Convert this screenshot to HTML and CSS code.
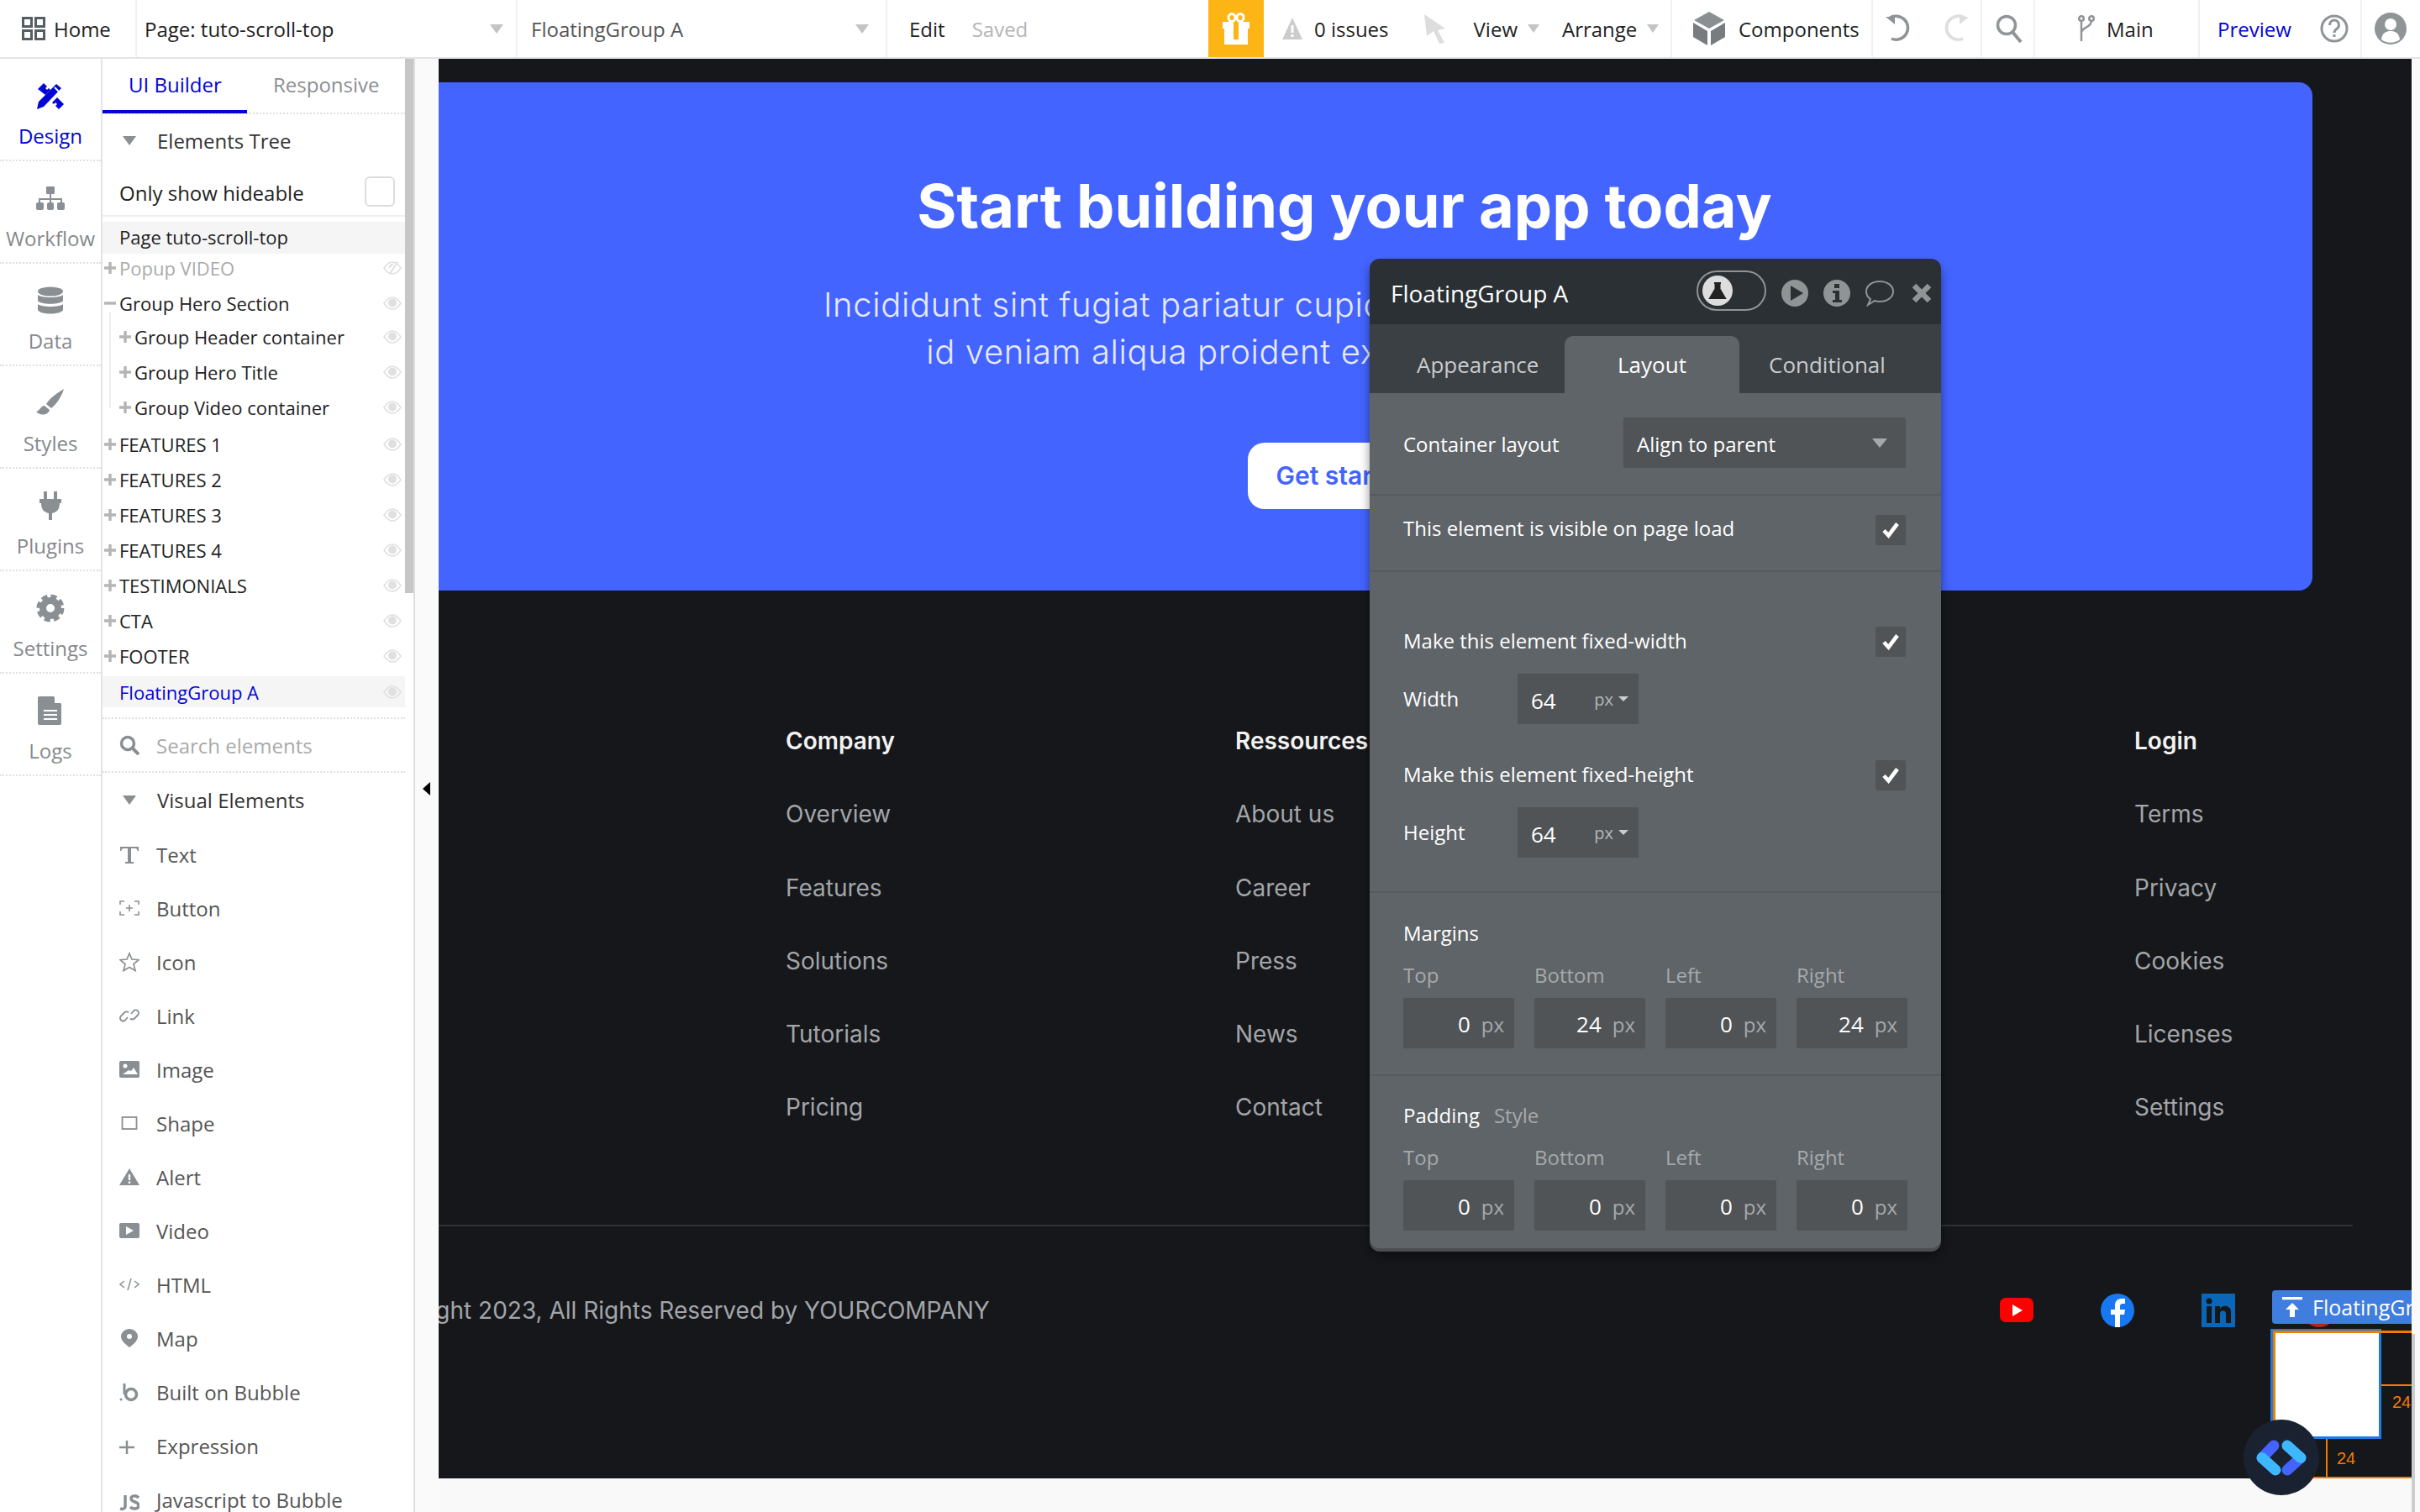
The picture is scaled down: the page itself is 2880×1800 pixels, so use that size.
FILE: index.html
```html
<!DOCTYPE html>
<html lang="en">
<head>
<meta charset="utf-8">
<title>Bubble editor</title>
<link rel="stylesheet" href="styles.css">
</head>
<body>
<svg class="defs" width="0" height="0">
  <symbol id="eye" viewBox="0 0 22 16"><path d="M1 8c3-4.500 6.500-7 10-7s7 2.500 10 7c-3 4.500-6.500 7-10 7S4 12.500 1 8z" fill="none" stroke="currentColor" stroke-width="1.500"/><circle cx="11" cy="7.500" r="5" fill="currentColor"/></symbol>
  <symbol id="eyeoff" viewBox="0 0 22 16"><path d="M1 8c3-4.500 6.500-7 10-7s7 2.500 10 7c-3 4.500-6.500 7-10 7S4 12.500 1 8z" fill="none" stroke="currentColor" stroke-width="1.500"/><path d="M8 15l9-14" stroke="currentColor" stroke-width="2"/><path d="M7 9a5 5 0 0 1 6-6z" fill="currentColor"/></symbol>
  <symbol id="plus" viewBox="0 0 14 14"><path d="M0 7h14M7 0v14" stroke="currentColor" stroke-width="3.400"/></symbol>
  <symbol id="minus" viewBox="0 0 14 14"><path d="M0 7h14" stroke="currentColor" stroke-width="3.400"/></symbol>
  <symbol id="check" viewBox="0 0 20 20"><path d="M2 10.500l5.500 6 10.500-14" fill="none" stroke="currentColor" stroke-width="4.600"/></symbol>
</svg>
<div class="app">
  <header class="topbar">
    <div class="cell c-home">
      <svg class="i28" viewBox="0 0 28 28"><g fill="none" stroke="#555e63" stroke-width="3"><rect x="1.500" y="1.500" width="10" height="10"/><rect x="16.500" y="1.500" width="10" height="10"/><rect x="1.500" y="16.500" width="10" height="10"/><rect x="16.500" y="16.500" width="10" height="10"/></g></svg>
      <span>Home</span>
    </div>
    <div class="cell c-page"><span>Page: tuto-scroll-top</span><i class="tri"></i></div>
    <div class="cell c-el"><span class="muted">FloatingGroup A</span><i class="tri"></i></div>
    <div class="cell c-edit"><span>Edit</span><span class="saved">Saved</span></div>
    <div class="gift">
      <svg width="36" height="38" viewBox="0 0 36 38"><g fill="#fff"><path d="M2 11h32v8h-2v19H4V19H2z"/></g><rect x="15" y="11" width="6" height="21" fill="#fdb515"/><g fill="none" stroke="#fff" stroke-width="3"><ellipse cx="13" cy="6" rx="4" ry="4.500"/><ellipse cx="23" cy="6" rx="4" ry="4.500"/></g></svg>
    </div>
    <div class="cell c-tools">
      <svg class="w-alert" width="26" height="28" viewBox="0 0 26 28"><path d="M13 1l12 26H1z" fill="#ccc"/><rect x="11.500" y="10" width="3" height="9" fill="#fff"/><rect x="11.500" y="21" width="3" height="3" fill="#fff"/></svg>
      <span class="issues">0 issues</span>
      <svg class="w-cursor" width="30" height="36" viewBox="0 0 30 36"><path d="M1 1l25 17-9 2 8 15-6 1-7-15-8 6z" fill="#ddd"/></svg>
      <span class="view">View</span><i class="tri t-s"></i>
      <span class="arrange">Arrange</span><i class="tri t-s"></i>
    </div>
    <div class="cell c-comp">
      <svg width="38" height="40" viewBox="0 0 38 40"><path d="M19 0l18 10-18 10L1 10z" fill="#8a8f92"/><path d="M0 13l17 10v17L0 30z" fill="#777c80"/><path d="M38 13L21 23v17l17-10z" fill="#777c80"/></svg>
      <span>Components</span>
    </div>
    <div class="cell c-undo">
      <svg width="34" height="34" viewBox="0 0 34 34"><path d="M5 5a14 14 0 1 1 3 24" fill="none" stroke="#8f9496" stroke-width="3.500"/><path d="M1 3h11v9z" fill="#8f9496"/></svg>
      <svg width="34" height="34" viewBox="0 0 34 34"><path d="M29 5a14 14 0 1 0-3 24" fill="none" stroke="#ddd" stroke-width="3.500"/><path d="M33 3H22v9z" fill="#ddd"/></svg>
    </div>
    <div class="cell c-search">
      <svg width="32" height="34" viewBox="0 0 32 34"><circle cx="13" cy="13" r="10.500" fill="none" stroke="#8f9496" stroke-width="3.500"/><path d="M20 21l10 12" stroke="#8f9496" stroke-width="4"/></svg>
    </div>
    <div class="cell c-main">
      <svg width="22" height="32" viewBox="0 0 22 32"><g fill="none" stroke="#8f9496" stroke-width="2.500"><circle cx="5" cy="4" r="2.800"/><circle cx="17" cy="4" r="2.800"/><path d="M5 7v24M17 7c0 8-12 7-12 14"/></g></svg>
      <span>Main</span>
    </div>
    <div class="cell c-prev">
      <span class="preview">Preview</span>
      <svg width="34" height="34" viewBox="0 0 34 34"><circle cx="17" cy="17" r="15" fill="none" stroke="#8f9496" stroke-width="3"/><path d="M11.500 13c0-8 11-8 11 0 0 5-5.500 4-5.500 9" fill="none" stroke="#8f9496" stroke-width="3"/><rect x="15.500" y="24" width="3" height="3" fill="#8f9496"/></svg>
    </div>
    <div class="cell c-avatar">
      <svg width="38" height="38" viewBox="0 0 38 38"><circle cx="19" cy="19" r="19" fill="#8f9496"/><circle cx="19" cy="14" r="7" fill="#fff"/><path d="M8 32c1-8 6-10 11-10s10 2 11 10c-6 5-16 5-22 0z" fill="#fff"/></svg>
    </div>
  </header>

  <div class="main">
    <nav class="rail">
      <div class="rail-item active">
        <svg class="rail-ic" viewBox="0 0 34 34"><g fill="#0205d3"><path d="M3 24L24 3l6 5L9 30l-8 3z"/><path d="M2 9l7-7 4 4-2 2 2 2 2-2 2 2-6 6z"/><path d="M19 25l6-6 8 8-6 6-4-4 2-2-2-2-2 2z"/></g><path d="M22 7l5 5" stroke="#fff" stroke-width="2"/></svg>
        <span>Design</span>
      </div>
      <div class="rail-item">
        <svg class="rail-ic" viewBox="0 0 34 34"><g fill="#8a8f93"><rect x="12" y="3" width="10" height="9" rx="1"/><rect x="0" y="22" width="9" height="9" rx="2"/><rect x="13" y="22" width="8" height="9" rx="2"/><rect x="25" y="22" width="9" height="9" rx="2"/></g><path d="M17 12v10M4 22v-4h26v4" fill="none" stroke="#8a8f93" stroke-width="2"/></svg>
        <span>Workflow</span>
      </div>
      <div class="rail-item">
        <svg class="rail-ic" viewBox="0 0 34 34"><g fill="#8a8f93"><ellipse cx="17" cy="6" rx="15" ry="5.500"/><path d="M2 10c4 4 26 4 30 0v7c-3 5-27 5-30 0z"/><path d="M2 21c4 4 26 4 30 0v7c-3 6-27 6-30 0z"/></g></svg>
        <span>Data</span>
      </div>
      <div class="rail-item">
        <svg class="rail-ic" viewBox="0 0 34 34"><g fill="#8a8f93"><path d="M33 0C25 5 16 11 12 18l6 5C24 18 30 10 33 0z"/><path d="M10 20c-5 0-5 6-10 7 4 5 14 5 16-2z"/></g></svg>
        <span>Styles</span>
      </div>
      <div class="rail-item">
        <svg class="rail-ic" viewBox="0 0 34 34"><g fill="#8a8f93"><rect x="9" y="0" width="4" height="9"/><rect x="21" y="0" width="4" height="9"/><path d="M4 9h26v5h-2c0 8-4 11-9 12v8h-4v-8c-5-1-9-4-9-12H4z"/></g></svg>
        <span>Plugins</span>
      </div>
      <div class="rail-item">
        <svg class="rail-ic" viewBox="0 0 34 34"><circle cx="17" cy="17" r="14" fill="none" stroke="#8a8f93" stroke-width="5" stroke-dasharray="7 4"/><circle cx="17" cy="17" r="9" fill="none" stroke="#8a8f93" stroke-width="8"/></svg>
        <span>Settings</span>
      </div>
      <div class="rail-item">
        <svg class="rail-ic" viewBox="0 0 34 34"><path d="M4 0h17l9 9v23a2 2 0 0 1-2 2H4a2 2 0 0 1-2-2V2a2 2 0 0 1 2-2z" fill="#8a8f93"/><path d="M22 0v8h8" fill="#fff"/><path d="M9 17h16M9 22h16M9 27h16" stroke="#fff" stroke-width="2"/></svg>
        <span>Logs</span>
      </div>
    </nav>

    <aside class="panel">
      <div class="panel-body">
        <div class="tabs">
          <div class="tab on">UI Builder</div>
          <div class="tab">Responsive</div>
        </div>
        <div class="sec-head h-tree"><i class="tri t-dark"></i><span>Elements Tree</span></div>
        <div class="only"><span>Only show hideable</span><i class="box"></i></div>
        <div class="page-row hl">Page tuto-scroll-top</div>
        <div class="tree">
          <div class="row dim"><svg class="plus"><use href="#plus"/></svg><span>Popup VIDEO</span><svg class="eye"><use href="#eyeoff"/></svg></div>
          <div class="row"><svg class="plus"><use href="#minus"/></svg><span>Group Hero Section</span><svg class="eye"><use href="#eye"/></svg></div>
          <div class="nested">
            <div class="row"><svg class="plus"><use href="#plus"/></svg><span>Group Header container</span><svg class="eye"><use href="#eye"/></svg></div>
            <div class="row"><svg class="plus"><use href="#plus"/></svg><span>Group Hero Title</span><svg class="eye"><use href="#eye"/></svg></div>
            <div class="row"><svg class="plus"><use href="#plus"/></svg><span>Group Video container</span><svg class="eye"><use href="#eye"/></svg></div>
          </div>
          <div class="row"><svg class="plus"><use href="#plus"/></svg><span>FEATURES 1</span><svg class="eye"><use href="#eye"/></svg></div>
          <div class="row"><svg class="plus"><use href="#plus"/></svg><span>FEATURES 2</span><svg class="eye"><use href="#eye"/></svg></div>
          <div class="row"><svg class="plus"><use href="#plus"/></svg><span>FEATURES 3</span><svg class="eye"><use href="#eye"/></svg></div>
          <div class="row"><svg class="plus"><use href="#plus"/></svg><span>FEATURES 4</span><svg class="eye"><use href="#eye"/></svg></div>
          <div class="row"><svg class="plus"><use href="#plus"/></svg><span>TESTIMONIALS</span><svg class="eye"><use href="#eye"/></svg></div>
          <div class="row"><svg class="plus"><use href="#plus"/></svg><span>CTA</span><svg class="eye"><use href="#eye"/></svg></div>
          <div class="row"><svg class="plus"><use href="#plus"/></svg><span>FOOTER</span><svg class="eye"><use href="#eye"/></svg></div>
          <div class="row selrow hl"><i class="plus"></i><span>FloatingGroup A</span><svg class="eye"><use href="#eye"/></svg></div>
        </div>
        <div class="search">
          <svg class="el-ic" viewBox="0 0 24 24"><circle cx="10" cy="10" r="7.500" fill="none" stroke="#8a8f93" stroke-width="3.500"/><path d="M15 15l8 8" stroke="#8a8f93" stroke-width="4"/></svg>
          <span>Search elements</span>
        </div>
        <div class="sec-head h-vis"><i class="tri t-dark"></i><span>Visual Elements</span></div>
        <div class="elements">
          <div class="el"><svg class="el-ic" viewBox="0 0 24 24"><path d="M1 3h22v5h-1.500c0-2-1-3-2.500-3h-5v16h3v2H7v-2h3V5H5C3.500 5 2.500 6 2.500 8H1z" fill="#8a8f93"/></svg><span>Text</span></div>
          <div class="el"><svg class="el-ic" viewBox="0 0 24 24"><path d="M6 4H1v4M18 4h5v4M6 20H1v-4M18 20h5v-4M12 8v8M8 12h8" fill="none" stroke="#8a8f93" stroke-width="1.600"/></svg><span>Button</span></div>
          <div class="el"><svg class="el-ic" viewBox="0 0 24 24"><path d="M12 2l3 7 8 .7-6 5.200 2 7.600-7-4-7 4 2-7.600-6-5.200L9 9z" fill="none" stroke="#8a8f93" stroke-width="1.700"/></svg><span>Icon</span></div>
          <div class="el"><svg class="el-ic" viewBox="0 0 24 24"><g fill="none" stroke="#8a8f93" stroke-width="1.800"><path d="M10 14l-3 3.500a3.500 3.500 0 0 1-5-5l4-4a3.500 3.500 0 0 1 5 0"/><path d="M14 10l3-3.500a3.500 3.500 0 0 1 5 5l-4 4a3.500 3.500 0 0 1-5 0"/></g></svg><span>Link</span></div>
          <div class="el"><svg class="el-ic" viewBox="0 0 24 24"><rect x="0" y="2" width="24" height="20" rx="2" fill="#8a8f93"/><circle cx="7" cy="8" r="2.500" fill="#fff"/><path d="M4 18l7-5 3 1 3-4 5 8z" fill="#fff"/></svg><span>Image</span></div>
          <div class="el"><svg class="el-ic" viewBox="0 0 24 24"><rect x="3.500" y="5" width="17" height="14" fill="none" stroke="#8a8f93" stroke-width="1.800"/></svg><span>Shape</span></div>
          <div class="el"><svg class="el-ic" viewBox="0 0 24 24"><path d="M12 2l12 20H0z" fill="#8a8f93"/><rect x="10.800" y="9" width="2.400" height="7" fill="#fff"/><rect x="10.800" y="17.500" width="2.400" height="2.400" fill="#fff"/></svg><span>Alert</span></div>
          <div class="el"><svg class="el-ic" viewBox="0 0 24 24"><rect x="0" y="3" width="24" height="18" rx="2" fill="#8a8f93"/><path d="M8 7l9 5-9 5z" fill="#fff"/></svg><span>Video</span></div>
          <div class="el"><svg class="el-ic" viewBox="0 0 24 24"><path d="M6 8l-5 4 5 4M18 8l5 4-5 4M14 5l-4 14" fill="none" stroke="#8a8f93" stroke-width="1.500"/></svg><span>HTML</span></div>
          <div class="el"><svg class="el-ic" viewBox="0 0 24 24"><path d="M12 23C7 19 2 15 2 10a10 9 0 0 1 20 0c0 5-5 9-10 13z" fill="#8a8f93"/><circle cx="12" cy="10" r="3" fill="#fff"/></svg><span>Map</span></div>
          <div class="el"><svg class="el-ic" viewBox="0 0 24 24"><circle cx="2" cy="21" r="1.500" fill="#8a8f93"/><path d="M6 2v13" stroke="#8a8f93" stroke-width="3"/><circle cx="14" cy="15" r="6.500" fill="none" stroke="#8a8f93" stroke-width="3.500"/></svg><span>Built on Bubble</span></div>
          <div class="el"><svg class="el-ic" viewBox="0 0 24 24"><path d="M0 14h18M9 6v16" stroke="#8a8f93" stroke-width="2.500"/></svg><span>Expression</span></div>
          <div class="el"><svg class="el-ic js-ic" viewBox="0 0 24 24"><path d="M7 4v13c0 3-3 4-6 3M23 7c-3-3-9-3-9 1 0 5 9 3 9 8 0 5-7 5-10 2" fill="none" stroke="#8a8f93" stroke-width="3.500"/></svg><span>Javascript to Bubble</span></div>
        </div>
      </div>
      <div class="track"><div class="thumb"></div></div>
    </aside>

    <div class="collapse"><i class="tri-left"></i></div>

    <section class="canvas">
      <div class="site">
        <div class="cta">
          <h1>Start building your app today</h1>
          <p>Incididunt sint fugiat pariatur cupidatat reprehenderit anim aliqua<br>id veniam aliqua proident excepteur commodo do a.</p>
          <a class="cta-btn">Get started</a>
        </div>
        <footer class="foot">
          <div class="foot-cols">
            <div></div>
            <div class="col"><b>Company</b><span>Overview</span><span>Features</span><span>Solutions</span><span>Tutorials</span><span>Pricing</span></div>
            <div class="col"><b>Ressources</b><span>About us</span><span>Career</span><span>Press</span><span>News</span><span>Contact</span></div>
            <div></div>
            <div class="col"><b>Login</b><span>Terms</span><span>Privacy</span><span>Cookies</span><span>Licenses</span><span>Settings</span></div>
          </div>
          <div class="foot-bottom">
            <span class="copy">Copyright 2023, All Rights Reserved by YOURCOMPANY</span>
            <div class="social">
              <svg width="40" height="40" viewBox="0 0 40 40"><rect x="0" y="5" width="40" height="29" rx="7" fill="#f00"/><path d="M15 13l12 7-12 7z" fill="#fff"/></svg>
              <svg width="40" height="40" viewBox="0 0 40 40"><circle cx="20" cy="20" r="20" fill="#1877f2"/><path d="M17 40V25h-5v-6h5v-5c0-5 3-8 8-8h4v6h-3c-2 0-3 1-3 3v4h6l-1 6h-5v15z" fill="#fff"/></svg>
              <svg width="40" height="40" viewBox="0 0 40 40"><rect width="40" height="40" fill="#0a66b7"/><g fill="#16171a"><circle cx="9" cy="9" r="3.500"/><rect x="6" y="15" width="6" height="20"/><path d="M16 15h6v3c2-5 13-5 13 4v13h-6V24c0-5-7-5-7 0v11h-6z"/></g></svg>
              <svg width="40" height="40" viewBox="0 0 40 40"><circle cx="20" cy="20" r="20" fill="#b3261e"/></svg>
            </div>
          </div>
        </footer>
      </div>
    </section>

    <div class="edge"><div class="edge-thumb"></div></div>
  </div>

  <div class="sel-box"></div>
  <div class="guide g-top"></div>
  <div class="guide g-left"></div>
  <div class="guide g-rv"></div>
  <div class="guide g-bv"></div>
  <div class="guide g-bh"></div>
  <span class="num n-r">24</span>
  <span class="num n-b">24</span>
  <div class="sel-label">
    <svg width="24" height="24" viewBox="0 0 24 24"><path d="M0 1.500h24" stroke="#fff" stroke-width="3.500"/><path d="M12 7l8 8h-5v9H9v-9H4z" fill="#fff"/></svg>
    <span>FloatingGroup A</span>
  </div>
  <div class="badge">
    <svg width="60" height="43" viewBox="0 0 60 43"><g fill="none" stroke-linecap="round" stroke-width="13"><path d="M7 21.500L21 7" stroke="#4364ff"/><path d="M53 21.500L37 36" stroke="#4364ff"/><path d="M7 21.500L23 36" stroke="#3db8ff"/><path d="M37 7l16 14.500" stroke="#3db8ff"/></g></svg>
  </div>

  <div class="editor">
    <div class="ed-head">
      <span class="ed-title">FloatingGroup A</span>
      <div class="toggle"><svg width="36" height="36" viewBox="0 0 36 36"><circle cx="18" cy="18" r="18" fill="#ddd"/><path d="M14 9h8M15.500 9v7L9 27h18l-6.500-11V9" fill="#222" stroke="#222" stroke-width="2"/></svg></div>
      <svg class="h-play" width="32" height="32" viewBox="0 0 32 32"><circle cx="16" cy="16" r="16" fill="#8f9496"/><path d="M11 7l15 9-15 9z" fill="#2a3033"/></svg>
      <svg class="h-info" width="32" height="32" viewBox="0 0 32 32"><circle cx="16" cy="16" r="16" fill="#8f9496"/><rect x="13" y="5" width="6" height="5" fill="#2a3033"/><path d="M11 13h8v11h3v3H11v-3h3v-8h-3z" fill="#2a3033"/></svg>
      <svg class="h-chat" width="36" height="32" viewBox="0 0 36 32"><path d="M18 2c9 0 16 5 16 12s-7 12-16 12c-2 0-4 0-6-1l-8 5 3-7c-3-2-5-5-5-9C2 7 9 2 18 2z" fill="none" stroke="#8f9496" stroke-width="2"/></svg>
      <svg class="h-close" width="24" height="24" viewBox="0 0 24 24"><path d="M3 3l18 18M21 3L3 21" stroke="#8f9496" stroke-width="6.500"/></svg>
    </div>
    <div class="ed-tabs">
      <div class="ed-tab t1">Appearance</div>
      <div class="ed-tab t2 on">Layout</div>
      <div class="ed-tab t3">Conditional</div>
    </div>
    <div class="sect s-layout">
      <span>Container layout</span>
      <div class="select"><span>Align to parent</span><i class="tri t-sel"></i></div>
    </div>
    <div class="sect s-vis">
      <span class="lift">This element is visible on page load</span>
      <div class="chk"><svg><use href="#check"/></svg></div>
    </div>
    <div class="sect s-size">
      <div class="chk-row"><span class="lift">Make this element fixed-width</span><div class="chk"><svg><use href="#check"/></svg></div></div>
      <div class="dim-row"><span class="dim-l">Width</span><div class="dim-in"><span class="v">64</span><span class="u">px</span><i class="tri t-px"></i></div></div>
      <div class="chk-row r2"><span class="lift">Make this element fixed-height</span><div class="chk"><svg><use href="#check"/></svg></div></div>
      <div class="dim-row"><span class="dim-l">Height</span><div class="dim-in"><span class="v">64</span><span class="u">px</span><i class="tri t-px"></i></div></div>
    </div>
    <div class="sect s-box">
      <div class="box-title">Margins</div>
      <div class="quad">
        <div class="q"><label>Top</label><div class="q-in"><span>0</span><em>px</em></div></div>
        <div class="q"><label>Bottom</label><div class="q-in"><span>24</span><em>px</em></div></div>
        <div class="q"><label>Left</label><div class="q-in"><span>0</span><em>px</em></div></div>
        <div class="q"><label>Right</label><div class="q-in"><span>24</span><em>px</em></div></div>
      </div>
    </div>
    <div class="sect s-box last">
      <div class="box-title">Padding<small>Style</small></div>
      <div class="quad">
        <div class="q"><label>Top</label><div class="q-in"><span>0</span><em>px</em></div></div>
        <div class="q"><label>Bottom</label><div class="q-in"><span>0</span><em>px</em></div></div>
        <div class="q"><label>Left</label><div class="q-in"><span>0</span><em>px</em></div></div>
        <div class="q"><label>Right</label><div class="q-in"><span>0</span><em>px</em></div></div>
      </div>
    </div>
  </div>
</div>
</body>
</html>
```
FILE: styles.css
```css
* { box-sizing: border-box; }
html, body { margin: 0; padding: 0; }
body { font-family: "Open Sans", sans-serif; font-size: 24px; color: #222; background: #fff; }
.defs { position: absolute; }
.app { position: relative; width: 2880px; height: 1800px; overflow: hidden; display: flex; flex-direction: column; }

.tri { display: inline-block; width: 0; height: 0; border-left: 8px solid transparent; border-right: 8px solid transparent; border-top: 11px solid #c4c4c4; flex: none; }

/* top bar */
.topbar { height: 70px; flex: none; display: flex; border-bottom: 2px solid #e4e4e4; background: #fff; }
.cell { height: 68px; display: flex; align-items: center; border-right: 2px solid #f0f0f0; flex: none; }
.c-home { width: 163px; padding-left: 26px; gap: 10px; }
.i28 { width: 28px; height: 28px; }
.c-page { width: 453px; padding-left: 9px; padding-right: 15px; justify-content: space-between; }
.c-el { width: 440px; padding-left: 16px; padding-right: 20px; justify-content: space-between; }
.muted { color: #555; }
.c-edit { width: 382px; padding-left: 26px; gap: 32px; border-right: 0; }
.saved { color: #b5b5b5; }
.gift { width: 66px; height: 68px; background: #fdb515; display: flex; align-items: center; justify-content: center; flex: none; }
.c-tools { width: 486px; padding-left: 21px; }
.issues { margin-left: 13px; }
.w-cursor { margin-left: 41px; }
.view { margin-left: 30px; }
.t-s { border-left-width: 7px; border-right-width: 7px; border-top-width: 10px; margin-left: 12px; }
.arrange { margin-left: 27px; }
.c-comp { width: 239px; padding-left: 25px; gap: 16px; }
.c-undo { width: 130px; padding-left: 14px; gap: 33px; }
.c-search { width: 63px; padding-left: 16px; }
.c-main { width: 196px; padding-left: 50px; gap: 13px; }
.c-prev { width: 193px; padding-left: 21px; gap: 34px; }
.preview { color: #0205d3; }
.c-avatar { width: 71px; border-right: 0; padding-left: 15px; }

.main { flex: 1; display: flex; min-height: 0; }

/* left rail */
.rail { width: 122px; flex: none; border-right: 2px solid #e4e4e4; background: #fff; }
.rail-item { height: 122px; width: 120px; border-bottom: 2px dotted #dfdfe8; display: flex; flex-direction: column; align-items: center; padding-top: 27px; font-size: 24px; line-height: 36px; color: #85898d; }
.rail-item.active { color: #0205d3; }
.rail-ic { width: 34px; height: 34px; margin-bottom: 13px; flex: none; }

/* panel */
.panel { width: 372px; flex: none; display: flex; border-right: 2px solid #ddd; background: #fff; }
.panel-body { width: 360px; flex: none; overflow: hidden; }
.track { width: 10px; flex: none; }
.thumb { height: 636px; background: #c6c6c6; }
.tabs { height: 66px; display: flex; border-bottom: 2px dotted #dfdfe8; position: relative; }
.tab { font-size: 24px; color: #8a8e92; line-height: 62px; padding-left: 31px; width: 172px; white-space: nowrap; }
.tab.on { color: #0205d3; height: 65px; border-bottom: 4px solid #0205d3; line-height: 61px; }
.sec-head { display: flex; align-items: center; padding-left: 24px; color: #333; }
.sec-head span { margin-left: 25px; }
.t-dark { border-top-color: #8a8f93; }
.h-tree { height: 64px; padding-bottom: 2px; }
.only { height: 58px; display: flex; align-items: center; justify-content: space-between; padding: 2px 12px 0 20px; border-bottom: 2px solid #eee; }
.box { width: 36px; height: 36px; border: 2px solid #ddd; border-radius: 6px; background: #fff; margin-top: -2px; }
.hl { background: #f5f5f6; }
.page-row { margin-top: 6px; height: 38px; line-height: 36px; padding-left: 20px; font-size: 22px; }
.tree { margin-top: -4px; font-size: 22px; }
.row { height: 42px; display: flex; align-items: center; position: relative; padding-right: 4px; }
.row span { flex: 1; white-space: nowrap; margin-left: 4px; }
.plus { width: 14px; height: 14px; margin-left: 2px; color: #b5b5b5; flex: none; }
.dim { color: #aaa; }
.eye { width: 22px; height: 16px; color: #e0e0e0; flex: none; }
.nested { margin: -2px 0 2px; padding-left: 18px; position: relative; }
.nested::before { content: ""; position: absolute; left: 8px; top: -8px; bottom: 20px; width: 2px; background: #eee; }
.selrow { height: 37px; margin-top: 3px; color: #0205d3; }
.selrow .plus { visibility: hidden; }
.search { margin-top: 12px; height: 66px; border-top: 2px dotted #dfdfe8; border-bottom: 2px dotted #dfdfe8; display: flex; align-items: center; padding-left: 20px; color: #aaa; }
.search span { margin-left: 20px; }
.el-ic { width: 24px; height: 24px; flex: none; }
.h-vis { height: 65px; }
.el { height: 64px; display: flex; align-items: center; padding-left: 20px; color: #555; }
.el span { margin-left: 20px; white-space: nowrap; }
.js-ic { margin-top: 6px; }

.collapse { width: 28px; flex: none; background: #fafafa; position: relative; }
.tri-left { position: absolute; left: 9px; top: 861px; border-top: 8px solid transparent; border-bottom: 8px solid transparent; border-right: 9px solid #000; }

/* canvas */
.canvas { flex: none; width: 2348px; height: 1730px; background: #f9f9f9; overflow: hidden; position: relative; }
.site { width: 2470px; margin-left: -122px; height: 1690px; background: #16171a; padding-top: 28px; font-family: Inter, sans-serif; }
.cta { margin: 0 48px; width: 2304px; height: 605px; background: #4364ff; border-radius: 16px; display: flex; flex-direction: column; align-items: center; padding-top: 103px; color: #fff; text-align: center; }
.cta h1 { margin: 0; font-size: 72px; line-height: 88px; font-weight: 700; white-space: nowrap; }
.cta p { margin: 46px 0 0; font-size: 40px; line-height: 56px; font-weight: 300; letter-spacing: .65px; color: #e6e9ff; white-space: nowrap; }
.cta-btn { margin-top: 80px; width: 230px; height: 79px; background: #fff; border-radius: 20px; color: #4364ff; font-size: 30px; font-weight: 600; line-height: 79px; padding-right: 1px; }
.foot { width: 2400px; }
.foot-cols { display: grid; grid-template-columns: repeat(5, 535px); padding-top: 159px; height: 755px; }
.col { display: flex; flex-direction: column; gap: 47.250px; font-size: 28px; line-height: 40px; color: #a2a5a9; white-space: nowrap; }
.col b { color: #f2f2f2; font-weight: 600; }
.foot-bottom { border-top: 2px solid #2e3033; height: 160px; display: flex; justify-content: space-between; padding: 80px 20px 0 31px; }
.copy { font-size: 28px; line-height: 40px; color: #a2a5a9; white-space: nowrap; }
.social { display: flex; gap: 80px; }

.edge { width: 10px; flex: none; background: #fafafa; position: relative; }
.edge-thumb { position: absolute; left: 0; top: 1518px; bottom: 0; width: 4px; background: #ccc; }

/* selection overlay */
.sel-box { position: absolute; left: 2702px; top: 1582px; width: 132px; height: 131px; border: 3px solid #1c7ce0; background: #fff; }
.guide { position: absolute; background: #f07c00; }
.g-top { left: 2705px; top: 1584px; width: 165px; height: 3px; }
.g-left { left: 2705px; top: 1585px; width: 3px; height: 120px; }
.g-rv { left: 2834px; top: 1648px; width: 36px; height: 2px; }
.g-bv { left: 2768px; top: 1713px; width: 2px; height: 46px; }
.g-bh { left: 2740px; top: 1758px; width: 130px; height: 2px; }
.num { position: absolute; font-family: "Liberation Sans", sans-serif; font-size: 20px; line-height: 24px; color: #f07c00; }
.n-r { left: 2847px; top: 1657px; }
.n-b { left: 2781px; top: 1724px; }
.sel-label { position: absolute; left: 2704px; top: 1536px; width: 166px; height: 40px; background: #3f7ddf; border-radius: 4px 0 0 4px; overflow: hidden; display: flex; align-items: center; padding-left: 12px; color: #fff; font-size: 25px; white-space: nowrap; gap: 12px; }
.sel-label svg { flex: none; }
.badge { position: absolute; left: 2670px; top: 1690px; width: 90px; height: 90px; border-radius: 50%; background: #1a2130; display: flex; align-items: center; justify-content: center; }

/* property editor */
.editor { position: absolute; left: 1630px; top: 308px; width: 680px; height: 1178px; background: #5f6468; border-radius: 12px; box-shadow: 0 4px 0 #4a4e51, 0 8px 12px rgba(0,0,0,.45); color: #fff; overflow: hidden; }
.ed-head { height: 78px; background: #2a3033; display: flex; align-items: center; padding-left: 25px; padding-top: 3px; }
.ed-title { font-size: 28px; width: 364px; white-space: nowrap; }
.toggle { width: 83px; height: 48px; border: 2px solid #8f9496; border-radius: 24px; padding: 4px 0 0 5px; flex: none; margin-top: -6px; }
.toggle svg { display: block; }
.h-play { margin-left: 18px; }
.h-info { margin-left: 18px; }
.h-chat { margin-left: 17px; }
.h-close { margin-left: 20px; }
.ed-tabs { height: 82px; background: #3b4044; padding-top: 14px; display: flex; }
.ed-tab { height: 68px; font-size: 26px; line-height: 68px; color: #c9cbcd; text-align: center; }
.t1 { width: 232px; text-align: left; padding-left: 56px; }
.t2 { width: 208px; }
.t3 { width: 240px; text-align: left; padding-left: 35px; }
.ed-tab.on { background: #5f6468; color: #fff; border-radius: 10px 10px 0 0; }
.sect { border-bottom: 2px solid #565b5e; padding: 0 42px 0 40px; }
.s-layout { height: 122px; display: flex; align-items: center; justify-content: space-between; padding-bottom: 2px; }
.s-layout span { padding-top: 2px; }
.select { width: 336px; height: 60px; background: #505457; border-radius: 2px; display: flex; align-items: center; justify-content: space-between; padding: 0 22px 0 16px; }
.t-sel { border-top-color: #a6a9ab; border-left-width: 9px; border-right-width: 9px; }
.s-vis { height: 91px; display: flex; align-items: center; justify-content: space-between; padding-bottom: 8px; }
.lift { margin-top: -4px; }
.chk { width: 36px; height: 36px; background: #505457; border-radius: 2px; color: #fff; display: flex; align-items: center; justify-content: center; }
.chk svg { width: 20px; height: 20px; }
.s-size { height: 382px; padding-top: 65px; }
.chk-row { display: flex; align-items: center; justify-content: space-between; }
.r2 { margin-top: 43px; }
.dim-row { display: flex; align-items: center; margin-top: 20px; }
.dim-l { width: 136px; margin-top: -2px; }
.dim-in { width: 144px; height: 60px; background: #505457; display: flex; align-items: center; padding: 0 12px 0 16px; font-size: 26px; }
.dim-in .v { flex: 1; padding-top: 4px; }
.dim-in .u { font-size: 20px; color: #b5b7b9; margin-right: 6px; }
.t-px { border-top-color: #ccc; border-left-width: 6px; border-right-width: 6px; border-top-width: 6px; }
.s-box { padding: 32px 40px 0; height: 218px; }
.s-box.last { border-bottom: 0; padding-top: 31px; height: 205px; }
.box-title { line-height: 32px; }
.box-title small { font-size: 24px; color: #a6a9ab; margin-left: 17px; }
.quad { display: grid; grid-template-columns: repeat(4, 132px); gap: 24px; margin-top: 18px; }
.q label { display: block; line-height: 32px; color: #a6a9ab; margin-bottom: 11px; }
.q-in { height: 60px; background: #505457; border-radius: 2px; display: flex; align-items: center; justify-content: flex-end; padding: 2px 12px 0 0; font-size: 26px; gap: 13px; }
.q-in em { font-style: normal; font-size: 24px; color: #a6a9ab; }
```
